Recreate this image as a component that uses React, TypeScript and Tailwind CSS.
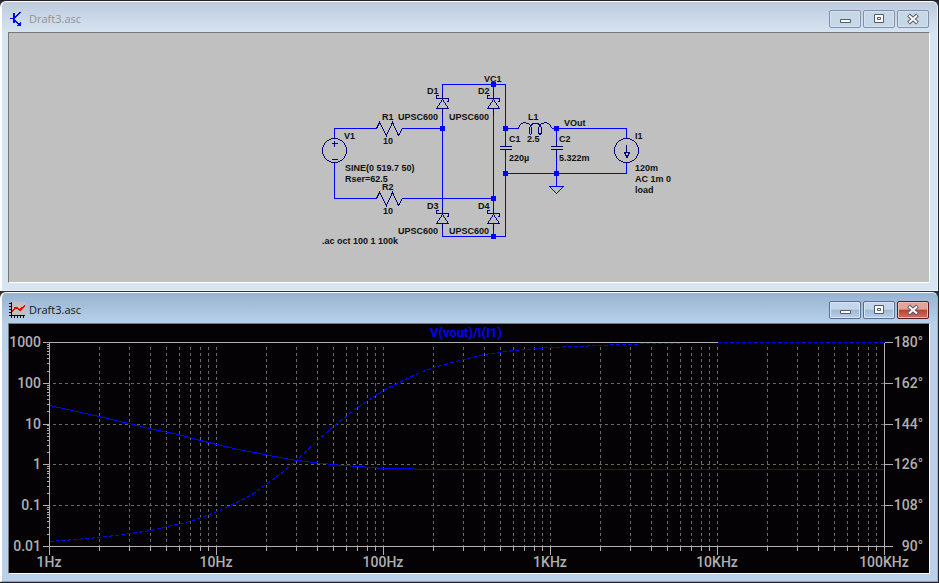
import type { ReactNode } from 'react';

const DIODES = [
  { x: 442, y: 98 },
  { x: 493, y: 98 },
  { x: 442, y: 213 },
  { x: 493, y: 213 },
];

const NODES = [
  [442, 128],
  [493, 84],
  [505, 128],
  [505, 173],
  [556, 128],
  [556, 173],
  [493, 198],
  [493, 236],
];

const LABELS: [number, number, string][] = [
  [484, 82, 'VC1'],
  [427, 94, 'D1'],
  [478, 94, 'D2'],
  [382, 120, 'R1'],
  [398, 120, 'UPSC600'],
  [449, 120, 'UPSC600'],
  [383, 144, '10'],
  [344, 139, 'V1'],
  [345, 171, 'SINE(0 519.7 50)'],
  [345, 182, 'Rser=62.5'],
  [382, 190, 'R2'],
  [383, 214, '10'],
  [427, 209, 'D3'],
  [478, 209, 'D4'],
  [398, 234, 'UPSC600'],
  [449, 234, 'UPSC600'],
  [322, 244, '.ac oct 100 1 100k'],
  [528, 120, 'L1'],
  [527, 142, '2.5'],
  [564, 126, 'VOut'],
  [509, 142, 'C1'],
  [509, 161, '220µ'],
  [559, 142, 'C2'],
  [559, 161, '5.322m'],
  [635, 139, 'I1'],
  [635, 171, '120m'],
  [635, 182, 'AC 1m 0'],
  [635, 193, 'load'],
];

const LEFT = 49;
const RIGHT = 884;
const TOP = 342;
const BOTTOM = 546;
const DECADE = 167;

const FREQUENCIES = ['1Hz', '10Hz', '100Hz', '1KHz', '10KHz', '100KHz'];
const ROWS = [
  { y: 342, gain: '1000', phase: '180°' },
  { y: 383, gain: '100', phase: '162°' },
  { y: 424, gain: '10', phase: '144°' },
  { y: 464, gain: '1', phase: '126°' },
  { y: 505, gain: '0.1', phase: '108°' },
  { y: 546, gain: '0.01', phase: '90°' },
];

const minorX = [0, 1, 2, 3, 4].flatMap((d) =>
  [2, 3, 4, 5, 6, 7, 8, 9].map((n) => Math.round(LEFT + DECADE * (d + Math.log10(n)))),
);
const majorX = [1, 2, 3, 4].map((d) => LEFT + DECADE * d);
const minorY = [0, 1, 2, 3, 4].flatMap((d) =>
  [2, 3, 4, 5, 6, 7, 8, 9].map((n) => Math.round(BOTTOM - 40.8 * (d + Math.log10(n)))),
);

const GAIN =
  '49,405 76,411 103,417 128,423 153,429 178,434 196,439 216,444 238,449 264,454 290,459 305,461 322,463 343,465 358,466 382,468 445,469 884,469';
const PHASE =
  '49,541 75,539 99,537 130,533 150,530 167,526 190,521 217,511 232,504 250,495 267,483 283,471 297,459 317,440 333,426 357,407 383,390 397,383 415,374 433,367 448,363 463,359 484,354 513,350 550,347 576,346 600,345 620,344 660,343 700,342 884,342';

function SchematicIcon() {
  return (
    <svg viewBox="0 0 16 16" className="h-4 w-4" fill="none" stroke="#0000f0" shapeRendering="crispEdges">
      <path d="M1 7.5h3M6 6.5L11.5 1M6 9.5L11.5 15" />
      <path d="M8 14.5h4v-4z" fill="#0000f0" stroke="none" />
      <path d="M5 2v10" strokeWidth="2" />
    </svg>
  );
}

function PlotIcon() {
  return (
    <svg viewBox="0 0 16 16" className="h-4 w-4" fill="none" shapeRendering="crispEdges">
      <path d="M2 0h14v14H2z" fill="#c0c0c0" />
      <path
        d="M2.5 0v16M0 1.5h2M0 4.5h2M0 7.5h2M0 10.5h2M0 13.5h16M5.5 13v3M8.5 13v3M11.5 13v3M14.5 13v3"
        stroke="#000"
      />
      <path d="M3 9.5L6 6h2.5L11 8l2.5-2.5L16 4" stroke="#f00000" strokeWidth="1.5" />
    </svg>
  );
}

type CaptionButtonProps = { label: string; danger?: boolean; active?: boolean; children: ReactNode };

function CaptionButton({ label, danger, active, children }: CaptionButtonProps) {
  const tone = danger
    ? 'border-[#5a1a20] bg-linear-to-b from-[#e2a39a] from-45% via-[#b9402c] via-50% to-[#cf7060] inset-ring-[#eebab2]'
    : active
      ? 'border-[#566f92] bg-linear-to-b from-[#c3d6eb] from-45% via-[#9fb9d6] via-50% to-[#b8d0ea] inset-ring-[#d8e6f4]'
      : 'border-[#8291b0] bg-[#c6d7e8] inset-ring-[#d4e2ef]';
  return (
    <button
      type="button"
      aria-label={label}
      className={`flex h-[18px] w-8 items-center justify-center rounded-xs border inset-ring ${tone}`}
    >
      <svg viewBox="0 0 14 12" className="h-3 w-3.5" fill="none">
        {children}
      </svg>
    </button>
  );
}

function Window({ icon, active, children }: { icon: ReactNode; active?: boolean; children: ReactNode }) {
  const frame = active
    ? 'border-r-[#4fd3ea] border-b-[#2fc4e0] bg-linear-to-b from-[#98b3d1] to-[#b9d1ea] to-[31px]'
    : 'border-r-[#e6f0fa] border-b-[#e6f0fa] bg-linear-to-b from-[#bdcbdd] to-[#d7e4f2] to-[31px]';
  return (
    <section className={`rounded-t-md border border-l-2 border-t-white border-l-white pr-[7px] pb-[7px] pl-1.5 ${frame}`}>
      <header className="flex h-[30px] items-center gap-1 px-px pt-1">
        {icon}
        <h2 className={`grow font-['Open_Sans',sans-serif] text-[11px] ${active ? 'text-[#111820]' : 'text-[#8f9499]'}`}>
          Draft3.asc
        </h2>
        <div className="flex gap-0.5">
          <CaptionButton label="Minimize" active={active}>
            <path d="M2.5 6.5h10v3h-10z" fill="#fff" stroke="#555a68" />
          </CaptionButton>
          <CaptionButton label="Maximize" active={active}>
            <path d="M2.5 1.5h9v8h-9z" fill="#fff" stroke="#555a68" />
            <path d="M5.5 4.5h3v2h-3z" stroke="#555a68" />
          </CaptionButton>
          <CaptionButton label="Close" active={active} danger={active}>
            <path d="M2.5 2l9 8M11.5 2l-9 8" stroke="#555a68" strokeWidth="4" />
            <path d="M3 2.5l8 7M11 2.5l-8 7" stroke="#fff" strokeWidth="2" />
          </CaptionButton>
        </div>
      </header>
      <div className="border border-t-[#77787c] border-l-[#77787c] border-r-white border-b-white">{children}</div>
    </section>
  );
}

function Schematic() {
  return (
    <svg viewBox="9 33 920 249" className="block h-auto w-full bg-[#c0c0c0]" fill="none" role="img" aria-label="Schematic">
      <g transform="translate(0.5 0.5)" shapeRendering="crispEdges">
        <g stroke="#0000ff">
          <path d="M334 138V128H376M402 128H442M334 162V198H376M402 198H493" />
          <path d="M442 98V84H505V146M442 108V213M442 223V236H505V150M493 84V98M493 108V213M493 223V236" />
          <path d="M505 128H518M551 128H626V138M505 173H626V162M556 128V146M556 150V186" />
          <path d="M549 186H563L556 193Z" />
        </g>
        <g stroke="#000080">
          <path d="M376 128l3-6 7 13 6-13 6 13 4-7M376 198l3-6 7 13 6-13 6 13 4-7" />
          <circle cx="334" cy="150" r="12" />
          <path d="M331 143h6M334 140v6M331 159h6" />
          <circle cx="626" cy="150" r="12" />
          <path d="M626 144v8M624 152h5l-2.5 5z" />
          <path d="M499 146h12M499 149h12M505 140v6M505 149v7M550 146h12M550 149h12M556 140v6M556 149v7" />
          <path d="M518 128C519 120 531 120 531 130C531 135 529 135 529 130C529 120 541 120 541 130C541 135 538 135 538 130C538 120 550 120 551 128" />
          {DIODES.map(({ x, y }) => (
            <path
              key={`${x}-${y}`}
              d={`M${x} ${y - 6}V${y}M${x - 4} ${y - 3}h-2v3h12v3h-2M${x} ${y + 1}l-6 9h12zM${x} ${y + 10}v6`}
            />
          ))}
        </g>
      </g>
      <g fill="#0000ff" shapeRendering="crispEdges">
        {NODES.map(([x, y]) => (
          <rect key={`${x}-${y}`} x={x - 2} y={y - 2} width="5" height="5" />
        ))}
      </g>
      <g fill="#111" className="font-['Liberation_Sans',sans-serif] text-[9px] font-bold">
        {LABELS.map(([x, y, text]) => (
          <text key={`${x}-${y}`} x={x} y={y}>
            {text}
          </text>
        ))}
      </g>
    </svg>
  );
}

function Plot() {
  return (
    <svg viewBox="9 324 920 249" className="block h-auto w-full bg-[#040204]" fill="none" role="img" aria-label="Frequency response">
      <g transform="translate(0.5 0.5)" shapeRendering="crispEdges">
        <g stroke="#686868" strokeDasharray="3 3">
          {[...minorX, ...majorX].map((x) => (
            <path key={x} d={`M${x} ${TOP + 4}V${BOTTOM}`} />
          ))}
          {ROWS.slice(1, 5).map(({ y }) => (
            <path key={y} d={`M${LEFT + 3} ${y}H${RIGHT}`} />
          ))}
        </g>
        <polyline points={GAIN} stroke="#0000ff" />
        <polyline points={PHASE} stroke="#0000ff" strokeDasharray="4 2" />
        <g stroke="#b0b0b0">
          <path d={`M${LEFT + DECADE * 4} ${TOP}H${LEFT}V${BOTTOM}H${RIGHT}V${TOP}`} />
          {ROWS.map(({ y }) => (
            <path key={y} d={`M${LEFT - 7} ${y}H${LEFT}M${RIGHT} ${y}h8`} />
          ))}
          {minorY.map((y) => (
            <path key={y} d={`M${LEFT - 3} ${y}H${LEFT}`} />
          ))}
          {minorX.map((x) => (
            <path key={x} d={`M${x} ${BOTTOM}v4`} />
          ))}
          {FREQUENCIES.map((f, i) => (
            <path key={f} d={`M${LEFT + DECADE * i} ${BOTTOM}v8`} />
          ))}
        </g>
      </g>
      <g className="font-['Roboto',sans-serif] text-sm font-medium" fill="#b0b0b0">
        {ROWS.map(({ y, gain, phase }) => (
          <g key={y}>
            <text x="41" y={y + 5} textAnchor="end">
              {gain}
            </text>
            <text x="923" y={y + 5} textAnchor="end">
              {phase}
            </text>
          </g>
        ))}
        {FREQUENCIES.map((f, i) => (
          <text key={f} x={LEFT + DECADE * i} y="567" textAnchor="middle">
            {f}
          </text>
        ))}
        <text x="466" y="337" textAnchor="middle" fill="#0000ff" className="text-[13px] font-bold">
          V(vout)/I(I1)
        </text>
      </g>
    </svg>
  );
}

export default function App() {
  return (
    <main className="flex flex-col gap-px border-t border-r border-b border-[#202428] bg-[#303438]">
      <Window icon={<SchematicIcon />}>
        <Schematic />
      </Window>
      <Window icon={<PlotIcon />} active>
        <Plot />
      </Window>
    </main>
  );
}
